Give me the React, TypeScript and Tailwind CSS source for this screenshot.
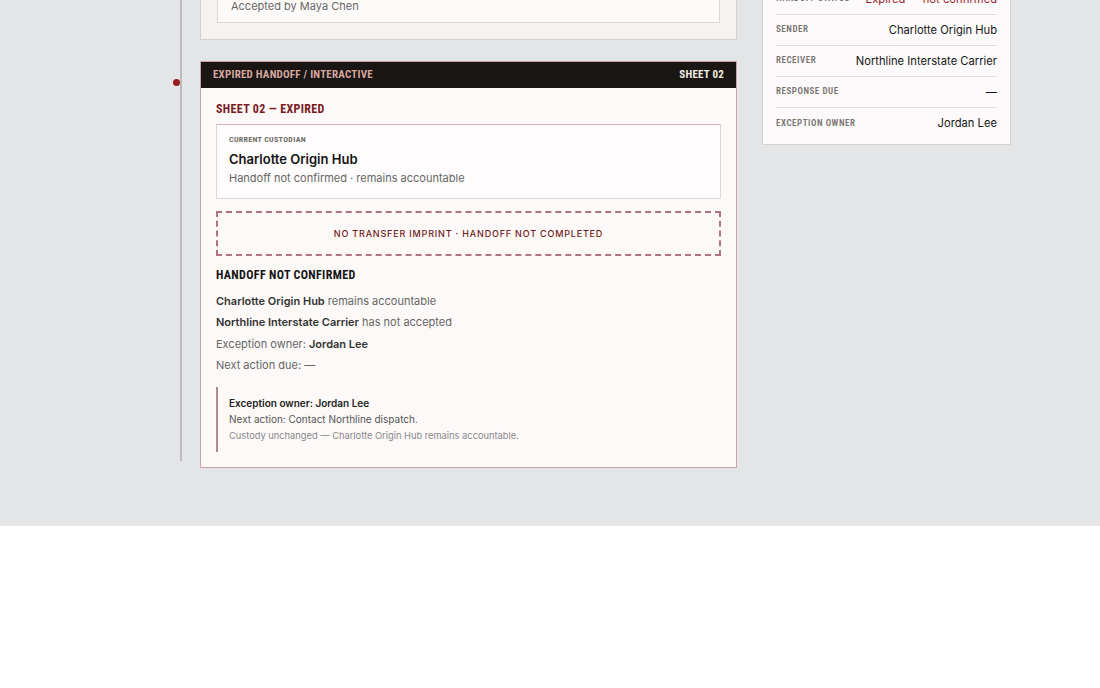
import React from 'react';

const cond = "font-['Roboto_Condensed',Roboto,sans-serif] font-stretch-[75%]";

function LedgerRow({ label, value, tone, last }: { label: string; value: string; tone?: string; last?: boolean }) {
  return (
    <div className={`flex h-[31px] items-center justify-between ${last ? '' : 'border-b border-[#e2dfdd]'}`}>
      <span className={`${cond} text-[9px] font-semibold uppercase tracking-[0.06em] text-[#77736f]`}>{label}</span>
      <span className={`text-[11.2px] ${tone ?? 'text-[#161616]'}`}>{value}</span>
    </div>
  );
}

export default function App() {
  return (
    <div className="min-h-[688px] bg-white font-['Inter',sans-serif]">
      <div className="overflow-hidden bg-[#e4e5e7] pb-[58px]">
        <div className="flex items-start pl-[172px]">
          {/* Timeline rail */}
          <div className="-mt-[83px] flex w-[28px] self-stretch pb-[7px]">
            <div className="ml-[8px] w-[2px] bg-[#bcbcbe]" />
          </div>

          {/* Sheets */}
          <div className="-mt-[83px] w-[537px]">
            {/* Sheet 01 (accepted) */}
            <div className="border border-[#d3d1ce] bg-[#f5f3f0] p-4">
              <div className="border border-[#dcd8d5] bg-[#fdfbfa] px-[13px] pt-[8px] pb-[8px]">
                <div className={`${cond} text-[8px] font-bold uppercase leading-[14px] tracking-[0.04em] text-[#6f6b68]`}>
                  Current custodian
                </div>
                <div className="mt-[3px] text-[13px] font-semibold leading-[18px] text-[#141414]">Northline Interstate Carrier</div>
                <div className="mt-[2px] text-[11px] leading-4 text-[#666]">Handoff confirmed · custody transferred</div>
                <div className="mt-[2px] text-[11px] leading-4 text-[#666]">Accepted by Maya Chen</div>
              </div>
            </div>

            {/* Sheet 02 (expired) */}
            <div className="relative mt-[21px] border border-[#c9a2ab] bg-[#fdf9f8]">
              <div className="absolute top-[17px] -left-[28px] h-[7px] w-[7px] rounded-full bg-[#9a1b1f]" />
              <div className={`${cond} flex h-[26px] items-center justify-between bg-[#1a1614] px-[12px] text-[11px] font-bold uppercase tracking-[0.02em]`}>
                <span className="text-[#d6a79f]">Expired handoff / interactive</span>
                <span className="text-[#f1ede4]">Sheet 02</span>
              </div>

              <div className="px-[15px] pt-[13px] pb-[15px]">
                <div className={`${cond} text-[12px] font-bold uppercase leading-4 tracking-[0.03em] text-[#7a1a1f]`}>
                  Sheet 02 — Expired
                </div>

                <div className="mt-[7px] border border-[#ddd7d6] border-t-[#cfb2b8] bg-[#fefcfc] px-[12px] pt-[8px] pb-[12px]">
                  <div className={`${cond} text-[8px] font-bold uppercase leading-[14px] tracking-[0.04em] text-[#6f6b68]`}>
                    Current custodian
                  </div>
                  <div className="mt-[3px] text-[13px] font-semibold leading-[18px] text-[#141414]">Charlotte Origin Hub</div>
                  <div className="mt-[2px] text-[11px] leading-4 text-[#666]">Handoff not confirmed · remains accountable</div>
                </div>

                <div className="mt-[12px] flex h-[45px] items-center justify-center border-2 border-dashed border-[#b27380] text-[9px] font-medium uppercase tracking-[0.09em] text-[#6e1a20]">
                  No transfer imprint · Handoff not completed
                </div>

                <div className={`${cond} mt-[11px] text-[12px] font-bold uppercase leading-4 tracking-[0.03em] text-[#151515]`}>
                  Handoff not confirmed
                </div>

                <div className="mt-[8px] text-[11px] leading-[21.33px] text-[#666]">
                  <div>
                    <span className="font-semibold text-[#333]">Charlotte Origin Hub</span> remains accountable
                  </div>
                  <div>
                    <span className="font-semibold text-[#333]">Northline Interstate Carrier</span> has not accepted
                  </div>
                  <div>
                    Exception owner: <span className="font-semibold text-[#333]">Jordan Lee</span>
                  </div>
                  <div>Next action due: —</div>
                </div>

                <div className="mt-[11px] border-l-2 border-[#b48892] pl-[11px] pt-[8px] pb-[9px]">
                  <div className="text-[10px] font-semibold leading-[16px] text-[#222]">Exception owner: Jordan Lee</div>
                  <div className="text-[10px] leading-[17px] text-[#555]">Next action: Contact Northline dispatch.</div>
                  <div className="text-[9.3px] leading-[15px] text-[#888]">Custody unchanged — Charlotte Origin Hub remains accountable.</div>
                </div>
              </div>
            </div>
          </div>

          {/* Custody ledger */}
          <div className="-mt-[54px] ml-[25px] w-[249px] border border-[#d4d3d2] bg-[#fcfafa] px-[13px] pt-[6px] pb-[5px]">
            <LedgerRow label="Sheet" value="02 / Interactive" />
            <LedgerRow label="Handoff status" value="Expired — not confirmed" tone="text-[#9a1b1f]" />
            <LedgerRow label="Sender" value="Charlotte Origin Hub" />
            <LedgerRow label="Receiver" value="Northline Interstate Carrier" />
            <LedgerRow label="Response due" value="—" />
            <LedgerRow label="Exception owner" value="Jordan Lee" last />
          </div>
        </div>
      </div>
    </div>
  );
}
